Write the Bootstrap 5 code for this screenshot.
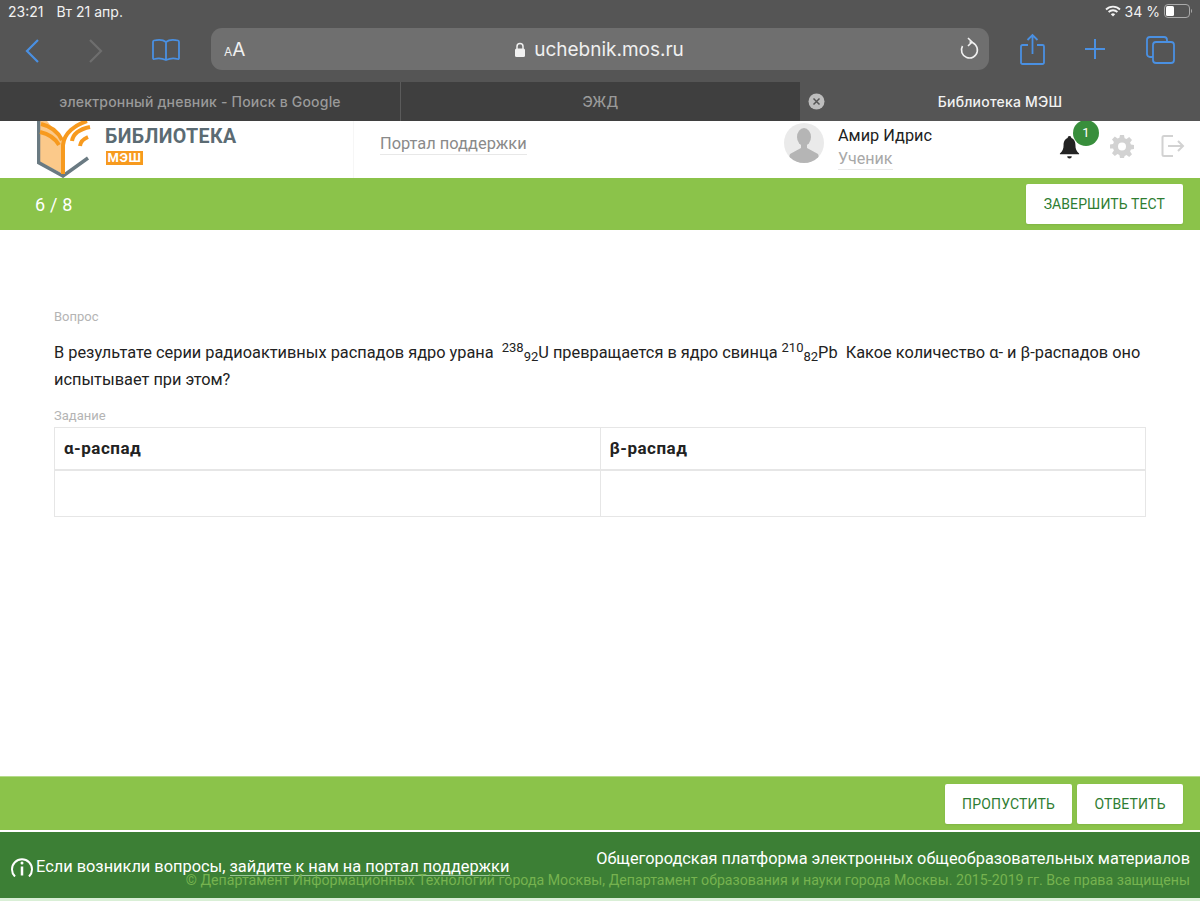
<!DOCTYPE html>
<html lang="ru">
<head>
<meta charset="utf-8">
<title>Библиотека МЭШ</title>
<link rel="stylesheet" href="https://cdn.jsdelivr.net/npm/bootstrap@5.3.0/dist/css/bootstrap.min.css">
<style>
html,body{height:901px;overflow:hidden}
body{font-family:Roboto,"Liberation Sans",sans-serif;background:#fff;color:#222}
.page-shell{height:901px}
.ios-chrome{background:#555;height:82px;color:#f2f2f2}
.ios-status{height:27px;padding:0 6px 5px 8px;font-size:14px;font-family:Inter,Roboto,sans-serif}
.ios-status .day{margin-left:13px;font-size:14px}
.ios-tools{height:55px;position:relative}
.tool-slot{position:absolute;top:0}
.addr{position:absolute;left:211px;top:1px;width:778px;height:42px;border-radius:11px;background:#6f6f6f;font-family:Inter,Roboto,sans-serif;color:#f0f0f0}
.addr .aa{position:absolute;left:13px;top:9px;font-size:19px;line-height:26px}
.addr .aa small{font-size:12px}
.addr .url{font-size:19px;line-height:42px;margin-left:-2px;padding-top:1px}
.addr .reload{position:absolute;right:10px;top:9px}
.ios-tabs{height:39px;background:#555;font-size:14px;font-weight:500;font-family:Inter,Roboto,sans-serif;letter-spacing:.2px}
.ios-tab{width:399px;flex:none;background:#3f3f3f;color:#9a9a9a;position:relative}
.ios-tab.first{width:401px;border-right:1px solid #5b5b5b}
.ios-tab.current{width:400px;background:#555;color:#f2f2f2}
.tab-x{position:absolute;left:8px;top:11px}
.site-head{height:57px;position:relative;overflow:hidden}
.logo-wrap{width:354px;height:57px;border-right:1px solid #f6f6f6;padding-left:37px;flex:none}
.logo-name{color:#5b6b73;font-weight:700;font-size:19.6px;line-height:24px;letter-spacing:.4px;margin-left:14px;margin-top:4px}
.logo-sub{background:#f79a1e;color:#fff;font-weight:700;font-size:13px;line-height:14px;width:37px;text-align:center;letter-spacing:.6px;margin-left:15px;margin-top:2px}
.support-link{color:#8a8a8a;font-size:16.4px;line-height:20px;margin-left:26px;border-bottom:1px solid #e8e8e8;margin-top:13px}
.user-ava{width:40px;height:40px;border-radius:50%;background:#eaeaea;overflow:hidden;margin-top:2px;flex:none}
.user-box{position:absolute;left:784px;top:0}
.user-name{font-size:16.3px;line-height:22px;color:#222;margin-top:4px}
.user-role{font-size:16.1px;line-height:21px;color:#a8a8a8;border-bottom:1px solid #e8e8e8;display:inline-block;margin-top:1px}
.user-txt{margin-left:14px}
.bell{position:absolute;left:1059px;top:14px}
.notify{position:absolute;left:1073px;top:-1px;width:26px;height:26px;border-radius:50%;background:#388e3c;color:#fff;font-size:13px;text-align:center;line-height:26px}
.gear{position:absolute;left:1110px;top:13px}
.exit{position:absolute;left:1161px;top:13px}
.green-bar{background:#8bc34a}
.bar-top{height:52px;padding:0 17px 0 35px}
.bar-count{color:#fff;font-size:18px;letter-spacing:.2px}
.action-btn{background:#fff;color:#2e7d32;font-size:14px;border-radius:2px;height:40px;border:0;padding:0 18px;letter-spacing:.1px;line-height:40px;box-shadow:0 1px 2px rgba(0,0,0,.08)}
.content-area{padding:79px 54px 0}
.field-label{color:#b4b4b4;font-size:13px;line-height:16px}
.q-text{font-size:16.35px;line-height:27px;color:#222;margin:14px 0 0}
.q-text sup,.q-text sub{font-size:13px}
.q-text sup{margin-left:4px}
.field-label.second{margin-top:15px;margin-bottom:3px}
.ans-table{width:1092px;table-layout:fixed;border-collapse:collapse;margin:0}
.ans-table th,.ans-table td{border:1px solid #e6e6e6;padding:0 9px}
.ans-table th{height:42px;padding-top:1px;font-size:17px;font-weight:700;letter-spacing:.5px;color:#222;border-bottom-width:2px}
.ans-table td{height:47px}
.ans-table th+th,.ans-table td+td{border-left-color:#d4d4d4}
.bar-bottom{height:54px;border-top:1px solid #b5db8a;padding:0 17px 0 0;gap:5px}
.bar-bottom .action-btn{padding:0 17px;margin-top:1px;letter-spacing:.15px;min-width:106px}
.foot{height:66px;margin-top:2px;background:#3c7f35;color:#fff;position:relative}
.foot-help{position:absolute;left:10px;top:24px;font-size:16.37px;line-height:22px;display:flex;align-items:center;gap:2px}
.foot-under{position:absolute;left:230px;top:43px;width:280px;height:1px;background:#9cc79a}
.foot-title{position:absolute;right:10px;top:16px;font-size:16.32px;line-height:22px;white-space:nowrap}
.foot-copy{position:absolute;right:10px;top:39px;font-size:14.18px;line-height:19px;color:#76b34f;white-space:nowrap}
.foot-tail{height:3px;background:#d9efd6}
</style>
</head>
<body>
<div class="page-shell d-flex flex-column">
  <div class="ios-chrome">
    <div class="ios-status d-flex align-items-center justify-content-between">
      <div>23:21<span class="day">Вт 21 апр.</span></div>
      <div class="d-flex align-items-center gap-1">
        <svg width="16" height="12" viewBox="0 0 16 12"><path d="M1 4.500a10 10 0 0 1 14 0M3.600 7a6.400 6.400 0 0 1 8.800 0" fill="none" stroke="#f2f2f2" stroke-width="1.800"/><path d="M5.800 9.200a3.200 3.200 0 0 1 4.400 0L8 11.400z" fill="#f2f2f2"/></svg>
        <span>34 %</span>
        <svg width="30" height="14" viewBox="0 0 30 14"><rect x=".5" y=".5" width="25" height="13" rx="3.500" fill="none" stroke="#aaa"/><rect x="2" y="2" width="8" height="10" rx="1.500" fill="#fff"/><path d="M27 5v4a2 2 0 0 0 1-2 2 2 0 0 0-1-2z" fill="#aaa"/></svg>
      </div>
    </div>
    <div class="ios-tools">
      <svg class="tool-slot" style="left:24px;top:11px" width="16" height="26" viewBox="0 0 16 26"><path d="M14 2 3 13l11 11" fill="none" stroke="#4a90e2" stroke-width="2.200"/></svg>
      <svg class="tool-slot" style="left:88px;top:11px" width="16" height="26" viewBox="0 0 16 26"><path d="m2 2 11 11L2 24" fill="none" stroke="#6e6e6e" stroke-width="2.200"/></svg>
      <svg class="tool-slot" style="left:152px;top:11px" width="28" height="24" viewBox="0 0 28 24"><path d="M14 4C11 1.500 6 1.500 2 2.500c-.8.200-1 .7-1 1.500v16c0 1 .6 1.300 1.500 1 3.500-1 7-1 11.500 1 4.500-2 8-2 11.500-1 .9.300 1.500 0 1.500-1V4c0-.8-.2-1.300-1-1.500C22 1.500 17 1.500 14 4zm0 0v18" fill="none" stroke="#4a90e2" stroke-width="1.800"/></svg>
      <div class="addr text-center">
        <div class="aa"><small>A</small>A</div>
        <div class="url d-inline-flex align-items-center gap-2">
          <svg width="12" height="16" viewBox="0 0 12 16"><path d="M3 7V4.500a3 3 0 0 1 6 0V7" fill="none" stroke="#f0f0f0" stroke-width="1.500"/><rect x="1" y="6.500" width="10" height="8.500" rx="1.500" fill="#f0f0f0"/></svg>
          <span>uchebnik.mos.ru</span>
        </div>
        <svg class="reload" width="20" height="24" viewBox="0 0 20 24"><path d="M10.500 5A8 8 0 1 1 3.500 9" fill="none" stroke="#f0f0f0" stroke-width="1.600"/><path d="M9 1l4 4-4 4" fill="none" stroke="#f0f0f0" stroke-width="1.600"/></svg>
      </div>
      <svg class="tool-slot" style="left:1020px;top:6px" width="25" height="32" viewBox="0 0 25 32"><path d="M8 12H2.500A1.500 1.500 0 0 0 1 13.500v16A1.500 1.500 0 0 0 2.500 31h20a1.500 1.500 0 0 0 1.500-1.500v-16a1.500 1.500 0 0 0-1.500-1.500H17M12.500 21V2M7.500 7l5-5 5 5" fill="none" stroke="#4a90e2" stroke-width="1.800"/></svg>
      <svg class="tool-slot" style="left:1084px;top:11px" width="22" height="22" viewBox="0 0 22 22"><path d="M11 1v20M1 11h20" stroke="#4a90e2" stroke-width="2" fill="none"/></svg>
      <svg class="tool-slot" style="left:1146px;top:9px" width="29" height="28" viewBox="0 0 29 28"><rect x="7" y="6" width="21" height="21" rx="3" fill="none" stroke="#4a90e2" stroke-width="1.800"/><path d="M7 21H4a3 3 0 0 1-3-3V4a3 3 0 0 1 3-3h14a3 3 0 0 1 3 3v2" fill="none" stroke="#4a90e2" stroke-width="1.800"/></svg>
    </div>
  </div>

  <div class="ios-tabs d-flex">
    <div class="ios-tab first d-flex align-items-center justify-content-center">электронный дневник - Поиск в Google</div>
    <div class="ios-tab d-flex align-items-center justify-content-center">ЭЖД</div>
    <div class="ios-tab current d-flex align-items-center justify-content-center">
      <svg class="tab-x" width="17" height="17" viewBox="0 0 17 17"><circle cx="8.500" cy="8.500" r="8" fill="#bdbdbd"/><path d="m5.500 5.500 6 6m0-6-6 6" stroke="#555" stroke-width="1.500"/></svg>
      Библиотека МЭШ
    </div>
  </div>

  <header class="site-head d-flex">
    <div class="logo-wrap d-flex">
      <svg width="54" height="57" viewBox="0 0 54 57">
        <path d="M3 0h7l16 20v33L3 41z" fill="#fbc98a"/>
        <path d="M1.500 0v41.500L26 55l25-18" fill="none" stroke="#6a7a82" stroke-width="3.500"/>
        <path d="M4 3c9 2 17 8 21 16M3 11c9 2 15 6 19 13M26 53V24C27 12 38 4 50 0" fill="none" stroke="#f79a1e" stroke-width="4"/>
        <path d="M35 20c1-7 8-12 18-14M43 25c.5-4 3-7 8-9" fill="none" stroke="#f79a1e" stroke-width="4"/>
      </svg>
      <div>
        <div class="logo-name">БИБЛИОТЕКА</div>
        <div class="logo-sub">МЭШ</div>
      </div>
    </div>
    <div><div class="support-link">Портал поддержки</div></div>
    <div class="user-box d-flex">
      <div class="user-ava">
        <svg width="40" height="40" viewBox="0 0 40 40"><ellipse cx="20" cy="14" rx="7" ry="9" fill="#b5b5b5"/><path d="M17 21h6v4l11 6c1 2 1 5 1 9H5c0-4 0-7 1-9l11-6z" fill="#b5b5b5"/></svg>
      </div>
      <div class="user-txt">
        <div class="user-name">Амир Идрис</div>
        <div class="user-role">Ученик</div>
      </div>
    </div>
    <svg class="bell" width="21" height="24" viewBox="0 0 23 26"><path d="M11.500 1c1.400 0 2 1 2 2.200C17 4.500 18 8 18 11c0 4 1 6.500 4 9v1H1v-1c3-2.500 4-5 4-9 0-3 1-6.500 4.500-7.800C9.500 2 10.100 1 11.500 1z" fill="#222"/><path d="M9 23h5a2.500 2.500 0 0 1-5 0z" fill="#222"/></svg>
    <div class="notify">1</div>
    <svg class="gear" width="24" height="24" viewBox="0 0 24 24"><path d="M10 1h4l.6 3.200 1.900.8 2.700-1.900 2.800 2.800-1.900 2.700.8 1.900 3.100.5v4l-3.100.6-.8 1.900 1.900 2.700-2.800 2.800-2.700-1.900-1.900.8L14 24h-4l-.6-3.100-1.900-.8-2.700 1.900-2.800-2.800 1.900-2.700-.8-1.900L0 14.500v-4l3.100-.5.800-1.900L2 5.400l2.800-2.800 2.700 1.900 1.900-.8zM12 8.500a4 4 0 1 0 0 8 4 4 0 0 0 0-8z" fill="#d2d2d2" fill-rule="evenodd"/></svg>
    <svg class="exit" width="24" height="24" viewBox="0 0 24 24"><path d="M12 2H3a1.500 1.500 0 0 0-1.500 1.500v17A1.500 1.500 0 0 0 3 22h9M7 12h15m-5-5 5 5-5 5" fill="none" stroke="#d2d2d2" stroke-width="2"/></svg>
  </header>

  <div class="green-bar bar-top d-flex align-items-center justify-content-between">
    <div class="bar-count">6 / 8</div>
    <button class="action-btn" type="button">ЗАВЕРШИТЬ ТЕСТ</button>
  </div>

  <main class="content-area flex-grow-1">
    <div class="field-label">Вопрос</div>
    <p class="q-text">В результате серии радиоактивных распадов ядро урана <sup>238</sup><sub>92</sub>U превращается в ядро свинца<sup>210</sup><sub>82</sub>Pb&nbsp; Какое количество α- и β-распадов оно испытывает при этом?</p>
    <div class="field-label second">Задание</div>
    <table class="ans-table">
      <tr><th>α-распад</th><th>β-распад</th></tr>
      <tr><td></td><td></td></tr>
    </table>
  </main>

  <div class="green-bar bar-bottom d-flex align-items-center justify-content-end">
    <button class="action-btn" type="button">ПРОПУСТИТЬ</button>
    <button class="action-btn" type="button">ОТВЕТИТЬ</button>
  </div>

  <footer class="foot">
    <div class="foot-help">
      <svg width="24" height="20" viewBox="0 0 24 20"><path d="M5 19.500A10 10 0 1 1 19 19.500" fill="none" stroke="#fff" stroke-width="2"/><circle cx="12" cy="6" r="1.500" fill="#fff"/><path d="M12 9.500v9" stroke="#fff" stroke-width="2.500"/></svg>
      <span>Если возникли вопросы, зайдите к нам на портал поддержки</span>
    </div>
    <div class="foot-under"></div>
    <div class="foot-title">Общегородская платформа электронных общеобразовательных материалов</div>
    <div class="foot-copy">© Департамент Информационных Технологий города Москвы, Департамент образования и науки города Москвы. 2015-2019 гг. Все права защищены</div>
  </footer>
  <div class="foot-tail"></div>
</div>
</body>
</html>
